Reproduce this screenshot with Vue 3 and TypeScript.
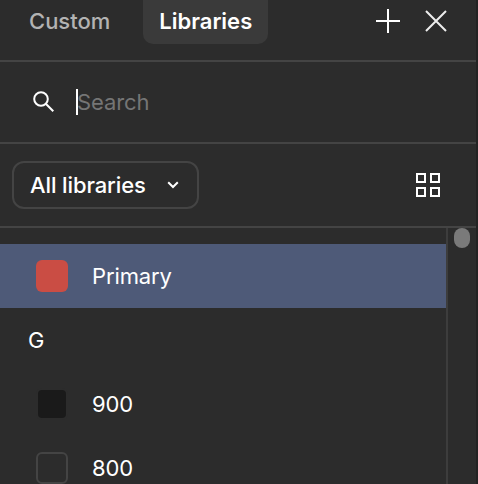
<script setup lang="ts">
interface Row { label: string; color: string; kind: 'selected' | 'dark' | 'outline' }
const rows: Row[] = [
  { label: '900', color: '#1a1a1a', kind: 'dark' },
  { label: '800', color: '#2c2c2c', kind: 'outline' },
]
</script>

<template>
  <div class="panel">
    <header class="tabs">
      <div class="tab-group">
        <span class="tab">Custom</span>
        <span class="tab active">Libraries</span>
      </div>
      <div class="actions">
        <svg width="24" height="24" viewBox="0 0 24 24" class="plus"><path d="M12 0V24M0 12H24" stroke="#fff" stroke-width="2" fill="none" /></svg>
        <svg width="22" height="22" viewBox="0 0 22 22" class="close"><path d="M1 1L21 21M21 1L1 21" stroke="#eee" stroke-width="2" fill="none" /></svg>
      </div>
    </header>
    <div class="search">
      <svg width="22" height="22" viewBox="0 0 22 22" class="search-icon">
        <circle cx="8" cy="8" r="6.8" stroke="#fff" stroke-width="2" fill="none" />
        <path d="M12.8 12.8L20.3 20.3" stroke="#fff" stroke-width="2" fill="none" />
      </svg>
      <span class="caret"></span>
      <span class="placeholder">Search</span>
    </div>
    <div class="filter">
      <button class="select">
        <span>All libraries</span>
        <svg width="12" height="8" viewBox="0 0 12 8"><path d="M1.2 1.2L6 6L10.8 1.2" stroke="#fff" stroke-width="2" fill="none" /></svg>
      </button>
      <svg width="24" height="24" viewBox="0 0 24 24" class="grid-icon">
        <g stroke="#fff" stroke-width="2" fill="none">
          <rect x="1" y="1" width="8" height="8" />
          <rect x="15" y="1" width="8" height="8" />
          <rect x="1" y="15" width="8" height="8" />
          <rect x="15" y="15" width="8" height="8" />
        </g>
      </svg>
    </div>
    <div class="body">
      <div class="list">
        <div class="row selected">
          <span class="swatch red"></span>
          <span>Primary</span>
        </div>
        <div class="group">G</div>
        <div v-for="row in rows" :key="row.label" class="row">
          <span class="swatch" :class="row.kind" :style="{ background: row.color }"></span>
          <span>{{ row.label }}</span>
        </div>
      </div>
      <div class="scrollbar"><div class="thumb"></div></div>
    </div>
  </div>
</template>

<style>
html, body { margin: 0; background: #2c2c2c; overflow: hidden; }
</style>

<style scoped>
.panel {
  width: 476px;
  height: 484px;
  border-right: 2px solid #232323;
  background: #2c2c2c;
  color: #fff;
  font-family: Inter, sans-serif;
  font-size: 22px;
  letter-spacing: -0.12px;
  display: flex;
  flex-direction: column;
  overflow: hidden;
}
.tabs {
  height: 60px;
  flex: none;
  border-bottom: 2px solid #444;
  display: flex;
  justify-content: space-between;
  align-items: flex-start;
  padding: 0 29px 0 13px;
}
.tab-group { display: flex; gap: 17px; }
.tab {
  height: 44px;
  line-height: 42px;
  padding: 0 16px;
  font-weight: 500;
  letter-spacing: 0;
  color: #b3b3b3;
}
.tab.active {
  color: #fff;
  font-weight: 600;
  background: #3a3a3a;
  border-radius: 0 0 10px 10px;
}
.actions { display: flex; align-items: center; gap: 25px; height: 42px; }
.search {
  height: 80px;
  flex: none;
  border-bottom: 2px solid #444;
  display: flex;
  align-items: center;
  padding-left: 33px;
}
.search-icon { margin-right: 21px; }
.caret { width: 2px; height: 26px; background: #fff; }
.placeholder { color: #757575; margin-left: -1px; }
.filter {
  height: 82px;
  flex: none;
  border-bottom: 2px solid #444;
  display: flex;
  align-items: center;
  justify-content: space-between;
  padding: 0 36px 0 12px;
}
.select {
  width: 187px;
  height: 48px;
  box-sizing: border-box;
  border: 2px solid #444;
  border-radius: 12px;
  background: transparent;
  color: #fff;
  font: inherit;
  letter-spacing: inherit;
  font-weight: 500;
  display: flex;
  align-items: center;
  justify-content: space-between;
  padding: 0 18px 0 16px;
}
.body { flex: 1; display: flex; min-height: 0; }
.list { width: 446px; padding-top: 16px; }
.row {
  height: 64px;
  display: flex;
  align-items: center;
  gap: 24px;
  padding-left: 36px;
}
.row.selected { background: #4e5a78; }
.swatch {
  width: 32px;
  height: 32px;
  box-sizing: border-box;
  border-radius: 6px;
  flex: none;
}
.swatch.red { background: #ca4d44; }
.swatch.dark { border: 2px solid #2c2c2c; }
.swatch.outline { border: 2px solid #444; }
.group {
  height: 64px;
  line-height: 64px;
  padding-left: 28px;
}
.scrollbar {
  flex: 1;
  border-left: 2px solid #3d3d3d;
  position: relative;
}
.thumb {
  position: absolute;
  left: 6px;
  top: 0;
  width: 16px;
  height: 20px;
  background: #7a7a7a;
  border-radius: 8px;
}
</style>
